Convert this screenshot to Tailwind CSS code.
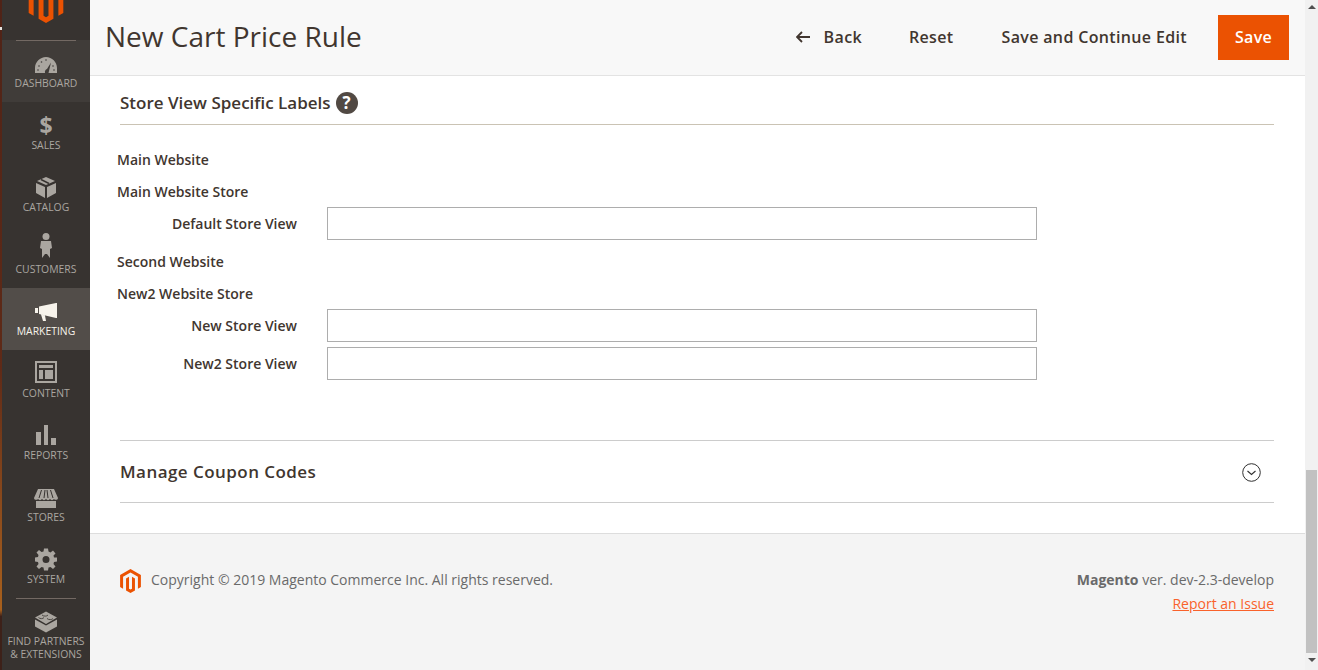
<!DOCTYPE html>
<html lang="en">
<head>
    <meta charset="UTF-8">
    <title>New Cart Price Rule</title>
    <script src="https://cdn.jsdelivr.net/npm/@tailwindcss/browser@4"></script>
</head>
<body class="h-[670px] overflow-hidden bg-white font-['Open_Sans',sans-serif] text-[#41362f]">
<div class="flex h-[670px]">
    <!-- menu -->
    <nav class="w-[90px] h-full shrink-0 bg-[#373330] flex flex-col relative overflow-hidden">
        <div class="absolute left-0 top-0 w-[2px] h-full bg-[linear-gradient(to_bottom,#4f2317_0%,#5f2a17_55%,#8a4a1c_75%,#a8601c_91%,#3d2119_92%,#3d2119_100%)]"></div>
        <div class="absolute left-0 top-[27px] w-[2px] h-[3px] bg-[#e8e4df]"></div>
        <div class="h-[40px] shrink-0 relative">
            <svg class="absolute left-[26px] top-[-17px]" width="40" height="40" viewBox="0 0 24 24"><path fill="#eb5202" d="M12 24l-4.455-2.572v-12l2.97-1.715v12.001l1.485.902 1.485-.902V7.713l2.97 1.715v12L12 24zM22.391 6v12l-2.969 1.714V7.713L12 3.43 4.574 7.713v12.001L1.609 18V6L12 0l10.391 6z"/></svg>
        </div>
        <div class="absolute left-4 top-[40px] w-[60px] h-px bg-[#736963] z-10"></div>

        <a class="h-[62px] shrink-0 ml-[2px] bg-[#403c39] flex flex-col items-center text-[#aaa6a0]">
            <div class="h-[36px] shrink-0">
                <svg class="mt-[17px]" width="22" height="16" viewBox="0 0 22 16"><path fill="#aaa6a0" d="M0 16 V11 C0 5 5 0 11 0 C17 0 22 5 22 11 V16 H13.500 L16 5.500 L12 12 C10.500 12.500 9.500 14 10 16 Z"/><g fill="#403c39"><circle cx="4" cy="9" r=".8"/><circle cx="6.500" cy="5" r=".8"/><circle cx="11" cy="3" r=".8"/><circle cx="3" cy="13" r=".8"/><circle cx="19" cy="13" r=".8"/><circle cx="18" cy="9" r=".8"/></g></svg>
            </div>
            <span class="text-[10.4px] leading-[14px]">DASHBOARD</span>
        </a>
        <a class="h-[62px] shrink-0 ml-[2px] flex flex-col items-center text-[#aaa6a0]">
            <div class="h-[36px] shrink-0">
                <span class="block mt-[10px] text-[23px] leading-[27px] font-bold">$</span>
            </div>
            <span class="text-[10.4px] leading-[14px]">SALES</span>
        </a>
        <a class="h-[62px] shrink-0 ml-[2px] flex flex-col items-center text-[#aaa6a0]">
            <div class="h-[36px] shrink-0">
                <svg class="mt-[13px]" width="20" height="21" viewBox="0 0 20 21"><path fill="#aaa6a0" d="M10 0 L19 4 L10 8 L1 4 Z M0 6 L9 10 V21 L0 16 Z M20 6 L11 10 V21 L20 16 Z"/><path stroke="#373330" stroke-width="1.500" d="M5 2.500 L13 6.500"/></svg>
            </div>
            <span class="text-[10.4px] leading-[14px]">CATALOG</span>
        </a>
        <a class="h-[62px] shrink-0 ml-[2px] flex flex-col items-center text-[#aaa6a0]">
            <div class="h-[36px] shrink-0">
                <svg class="mt-[7px]" width="12" height="25" viewBox="0 0 12 25"><circle cx="6" cy="3.500" r="3.500" fill="#aaa6a0"/><path fill="#aaa6a0" d="M1 8 H11 L12 15 L10 16 V25 L7 21 H5 L2 25 V16 L0 15 Z"/></svg>
            </div>
            <span class="text-[10.4px] leading-[14px]">CUSTOMERS</span>
        </a>
        <a class="h-[62px] shrink-0 ml-[2px] bg-[#524d49] flex flex-col items-center text-[#f7f3eb]">
            <div class="h-[36px] shrink-0">
                <svg class="mt-[15px]" width="22" height="18" viewBox="0 0 22 18"><path fill="#f7f3eb" d="M0 5 H3 V10 H0 Z M4 3.500 L21 0 H22 V15 H21 L4 11 Z M6 11.500 L10 12.500 L11 18 H8 Z"/></svg>
            </div>
            <span class="text-[10.4px] leading-[14px]">MARKETING</span>
        </a>
        <a class="h-[62px] shrink-0 ml-[2px] flex flex-col items-center text-[#aaa6a0]">
            <div class="h-[36px] shrink-0">
                <svg class="mt-[11px]" width="22" height="22" viewBox="0 0 22 22"><path fill="#aaa6a0" fill-rule="evenodd" d="M0 0 H22 V22 H0 Z M2 2 V20 H20 V2 Z"/><path fill="#aaa6a0" d="M4 4 H18 V7 H4 Z M4 9 H8 V18 H4 Z M10 9 H18 V18 H10 Z"/></svg>
            </div>
            <span class="text-[10.4px] leading-[14px]">CONTENT</span>
        </a>
        <a class="h-[62px] shrink-0 ml-[2px] flex flex-col items-center text-[#aaa6a0]">
            <div class="h-[36px] shrink-0">
                <svg class="mt-[13px]" width="20" height="20" viewBox="0 0 20 20"><path fill="#aaa6a0" d="M0 7 H5 V20 H0 Z M8 0 H12 V20 H8 Z M15 13 H20 V20 H15 Z"/></svg>
            </div>
            <span class="text-[10.4px] leading-[14px]">REPORTS</span>
        </a>
        <a class="h-[62px] shrink-0 ml-[2px] flex flex-col items-center text-[#aaa6a0]">
            <div class="h-[36px] shrink-0">
                <svg class="mt-[15px]" width="24" height="19" viewBox="0 0 24 19"><path fill="#aaa6a0" d="M4 0 H20 L24 9 C24 11 21 11.500 20 10 C19 11.500 17 11.500 16 10 C15 11.500 13 11.500 12 10 C11 11.500 9 11.500 8 10 C7 11.500 5 11.500 4 10 C3 11.500 0 11 0 9 Z M2 12 H22 V19 H2 Z"/><path stroke="#373330" stroke-width="1" d="M7.500 1 L5 9 M11 1 L10 9 M13 1 L14 9 M16.500 1 L19 9"/></svg>
            </div>
            <span class="text-[10.4px] leading-[14px]">STORES</span>
        </a>
        <a class="h-[62px] shrink-0 ml-[2px] flex flex-col items-center text-[#aaa6a0]">
            <div class="h-[36px] shrink-0">
                <svg class="mt-[12px]" width="22" height="23" viewBox="0 0 22 22"><path fill="#aaa6a0" fill-rule="evenodd" d="M9 0 H13 L13.500 3 L15.500 4 L18 2 L20.500 5 L18.500 7 L19 9 L22 9 V13 L19 13.500 L18.500 15.500 L20.500 18 L18 20.500 L15.500 18.500 L13.500 19 L13 22 H9 L8.500 19 L6.500 18.500 L4 20.500 L1.500 18 L3.500 15.500 L3 13.500 L0 13 V9 L3 8.500 L3.500 6.500 L1.500 4 L4 1.500 L6.500 3.500 L8.500 3 Z M11 7.500 A3.500 3.500 0 1 0 11 14.500 A3.500 3.500 0 1 0 11 7.500 Z"/></svg>
            </div>
            <span class="text-[10.4px] leading-[14px]">SYSTEM</span>
        </a>
        <div class="absolute left-4 top-[598px] w-[60px] h-px bg-[#736963] z-10"></div>
        <a class="shrink-0 ml-[2px] flex flex-col items-center text-[#aaa6a0]">
            <div class="h-[37px] shrink-0">
                <svg class="mt-[12px]" width="22" height="23" viewBox="0 0 22 22"><path fill="#aaa6a0" d="M0 9 L11 15 L22 9 V16 L11 22 L0 16 Z M11 1 L22 7 L11 13.500 L0 7 Z"/><path fill="none" stroke="#373330" stroke-width=".8" d="M7 4.500 C8.500 6 12 6 13 4.500 M3.500 7 C5 8.500 8 8.500 9 7 M12 8 C13.500 9.500 17 9.500 18 8"/></svg>
            </div>
            <span class="text-[10.4px] leading-[13px] text-center">FIND PARTNERS<br>&amp; EXTENSIONS</span>
        </a>
    </nav>

    <div class="flex-1 flex flex-col min-w-0">
        <!-- page actions -->
        <header class="h-[76px] shrink-0 bg-[#f8f8f8] border-b border-[#e3e3e3] flex items-center pl-[15px] pr-[16px]">
            <h1 class="text-[28px] leading-[36px] mb-[3px]">New Cart Price Rule</h1>
            <div class="ml-auto flex items-center text-[16px] font-semibold tracking-[.35px] mb-[1px]">
                <svg class="mr-[14px]" width="14" height="12" viewBox="0 0 14 12"><path fill="none" stroke="#41362f" stroke-width="1.800" d="M6 1 L1 6 L6 11 M1 6 H14"/></svg>
                <span>Back</span>
                <span class="ml-[47px]">Reset</span>
                <span class="ml-[48px]">Save and Continue Edit</span>
                <button class="ml-[31px] w-[71px] h-[45px] bg-[#eb5202] text-white font-semibold">Save</button>
            </div>
        </header>

        <main class="h-[457px] shrink-0 bg-white pl-[30px] pr-[31px]">
            <div class="h-[49px] border-b border-[#cac3b4] flex items-center pt-[6px]">
                <h2 class="text-[17px] font-semibold">Store View Specific Labels</h2>
                <span class="ml-[5px] w-[22px] h-[22px] rounded-full bg-[#514943] text-white text-[17px] font-bold leading-[22px] text-center">?</span>
            </div>
            <div class="-ml-[3px] text-[14px] font-semibold">
                <div class="mt-[24px] h-[22px] leading-[22px]">Main Website</div>
                <div class="mt-[10px] h-[22px] leading-[22px]">Main Website Store</div>
                <div class="mt-[4px] flex items-center h-[33px]">
                    <label class="w-[180px] text-right">Default Store View</label>
                    <input class="ml-[30px] w-[710px] h-[33px] border border-[#adadad] bg-white">
                </div>
                <div class="mt-[11px] h-[22px] leading-[22px]">Second Website</div>
                <div class="mt-[10px] h-[22px] leading-[22px]">New2 Website Store</div>
                <div class="mt-[4px] flex items-center h-[33px]">
                    <label class="w-[180px] text-right">New Store View</label>
                    <input class="ml-[30px] w-[710px] h-[33px] border border-[#adadad] bg-white">
                </div>
                <div class="mt-[5px] flex items-center h-[33px]">
                    <label class="w-[180px] text-right">New2 Store View</label>
                    <input class="ml-[30px] w-[710px] h-[33px] border border-[#adadad] bg-white">
                </div>
            </div>
            <div class="mt-[60px] h-[63px] border-y border-[#cccccc] flex items-center justify-between pr-[13px]">
                <h3 class="text-[17px] font-semibold tracking-[.45px]">Manage Coupon Codes</h3>
                <svg class="mt-[2px]" width="19" height="19" viewBox="0 0 19 19"><circle cx="9.500" cy="9.500" r="8.800" fill="none" stroke="#303030" stroke-width="1"/><path fill="none" stroke="#303030" stroke-width="1.100" d="M5.500 8 L9.500 11.500 L13.500 8"/></svg>
            </div>
        </main>

        <footer class="flex-1 bg-[#f4f4f4] border-t border-[#dddddd] pl-[30px] pr-[31px] flex text-[14px] text-[#6a6a6a]">
            <div class="flex items-start mt-[35px]">
                <svg width="21" height="24" viewBox="1.600 0 20.800 24"><path fill="#eb5202" d="M12 24l-4.455-2.572v-12l2.97-1.715v12.001l1.485.902 1.485-.902V7.713l2.97 1.715v12L12 24zM22.391 6v12l-2.969 1.714V7.713L12 3.43 4.574 7.713v12.001L1.609 18V6L12 0l10.391 6z"/></svg>
                <span class="ml-[10px] leading-[22px]">Copyright © 2019 Magento Commerce Inc. All rights reserved.</span>
            </div>
            <div class="ml-auto mt-[35px] text-right">
                <div class="leading-[22px]"><b class="font-bold">Magento</b> ver. dev-2.3-develop</div>
                <a class="block mt-[2px] leading-[22px] text-[#f9622b] underline">Report an Issue</a>
            </div>
        </footer>
    </div>

    <!-- scrollbar -->
    <div class="w-[13px] h-full shrink-0 bg-[#f1f1f1] flex flex-col items-center">
        <div class="mt-[5px] w-0 h-0 border-x-[4px] border-x-transparent border-b-[4px] border-b-[#505050]"></div>
        <div class="mt-[461px] w-[11px] h-[183px] bg-[#c1c1c1]"></div>
        <div class="mt-[5px] w-0 h-0 border-x-[4px] border-x-transparent border-t-[4px] border-t-[#505050]"></div>
    </div>
</div>
</body>
</html>
